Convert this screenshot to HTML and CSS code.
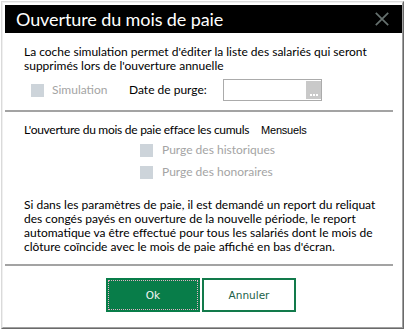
FILE: index.html
```html
<!DOCTYPE html>
<html lang="fr">
<head>
<meta charset="utf-8">
<title>Ouverture du mois de paie</title>
<link rel="stylesheet" href="styles.css">
</head>
<body>
<div class="window">
  <div class="frame">
    <div class="dialog">
      <div class="titlebar">
        <span class="title">Ouverture du mois de paie</span>
        <svg class="close" width="14" height="14" viewBox="0 0 14 14">
          <path d="M0.8 0.8 L13.2 13.2 M13.2 0.8 L0.8 13.2" stroke="#66716f" stroke-width="1.7" fill="none"/>
        </svg>
      </div>
      <div class="body">
        <div class="sec1">
          <p class="text">La coche simulation permet d'éditer la liste des salariés qui seront<br>supprimés lors de l'ouverture annuelle</p>
          <div class="row">
            <div class="sim"><span class="cb"></span><span class="dis">Simulation</span></div>
            <span class="datelabel">Date de purge:</span>
            <div class="datefield">
              <span class="input"></span>
              <span class="dots"><i></i><i></i><i></i></span>
            </div>
          </div>
        </div>
        <div class="sep"></div>
        <div class="sec2">
          <p class="text cumulsline"><span class="cumuls">L'ouverture du mois de paie efface les cumuls</span><span class="mensuels">Mensuels</span></p>
          <div class="opt"><span class="cb"></span><span class="dis">Purge des historiques</span></div>
          <div class="opt"><span class="cb"></span><span class="dis">Purge des honoraires</span></div>
        </div>
        <p class="text para">Si dans les paramètres de paie, il est demandé un report du reliquat<br>des congés payés en ouverture de la nouvelle période, le report<br>automatique va être effectué pour tous les salariés dont le mois de<br>clôture coïncide avec le mois de paie affiché en bas d'écran.</p>
        <div class="sep sep2"></div>
        <div class="buttons">
          <div class="btn ok"><span class="focus">Ok</span></div>
          <div class="btn cancel">Annuler</div>
        </div>
      </div>
    </div>
  </div>
</div>
</body>
</html>
```

FILE: styles.css
```css
html, body {
  margin: 0;
  padding: 0;
  background: #ffffff;
}

.window {
  margin: 1px 0 0 1px;
  width: 401px;
  border-style: solid;
  border-width: 1px;
  border-color: #dadada #6a6a6a #6a6a6a #dadada;
}

.frame {
  border-style: solid;
  border-width: 1px;
  border-color: #f0f0f0 #a0a0a0 #a0a0a0 #f0f0f0;
  padding: 2px 1px 2px 2px;
  background: #ffffff;
}

.dialog {
  width: 397px;
  height: 320px;
  display: flex;
  flex-direction: column;
  background: #ffffff;
}

.titlebar {
  height: 28px;
  background: #000000;
  display: flex;
  align-items: center;
  justify-content: space-between;
  padding: 0 13px 0 11px;
  flex-shrink: 0;
}

.title {
  font-family: Lato, "Noto Sans", sans-serif;
  font-size: 18px;
  letter-spacing: -0.1px;
  color: #ffffff;
  line-height: 28px;
  white-space: nowrap;
}

.close {
  display: block;
}

.body {
  font-family: Lato, "Noto Sans", sans-serif;
  font-size: 12px;
  color: #000000;
  display: flex;
  flex-direction: column;
}

.text {
  margin: 0;
  padding-left: 19px;
  line-height: 14px;
  white-space: nowrap;
}

.sec1 {
  padding-top: 12px;
}

.row {
  display: flex;
  align-items: center;
  height: 22px;
  margin-top: 6px;
}

.sim {
  display: flex;
  align-items: center;
  width: 98px;
  margin-left: 26px;
}

.cb {
  display: block;
  width: 13px;
  height: 13px;
  background: #cdd4da;
  flex-shrink: 0;
}

.dis {
  color: #a4a4a4;
  margin-left: 8px;
  line-height: 14px;
}

.datelabel {
  width: 94px;
  line-height: 14px;
}

.datefield {
  width: 97px;
  height: 20px;
  border: 1px solid #ababab;
  display: flex;
  align-items: center;
}

.input {
  flex: 1;
  height: 20px;
}

.dots {
  width: 15px;
  height: 18px;
  background: #c9c9c9;
  display: flex;
  justify-content: center;
  align-items: flex-end;
  gap: 1px;
  padding-bottom: 3px;
  box-sizing: border-box;
}

.dots i {
  display: block;
  width: 2px;
  height: 2px;
  background: #ffffff;
}

.sep {
  height: 2px;
  width: 388px;
  background: #a3a3a3;
  margin-top: 9px;
  flex-shrink: 0;
}

.sec2 {
  padding-top: 11px;
}

.cumulsline {
  display: flex;
  align-items: baseline;
}

.cumuls {
  display: block;
  width: 237px;
  letter-spacing: -0.27px;
}

.mensuels {
  font-family: "Liberation Sans", Arial, sans-serif;
  font-size: 11px;
  letter-spacing: -0.2px;
}

.opt {
  display: flex;
  align-items: center;
  height: 22px;
  padding-left: 135px;
}

.sec2 .text {
  margin-bottom: 2px;
}

.opt .dis {
  margin-left: 9px;
}

.para {
  margin-top: 15px;
}

.sep2 {
  margin-top: 10px;
}

.buttons {
  display: flex;
  justify-content: center;
  gap: 2px;
  margin-top: 12px;
  padding-right: 5px;
}

.btn {
  box-sizing: border-box;
  width: 94px;
  height: 34px;
  display: flex;
  align-items: center;
  justify-content: center;
  font-family: "DejaVu Sans", Verdana, sans-serif;
  font-size: 10.5px;
}

.ok {
  background: #087d49;
  color: #f4f4f4;
  padding: 2px;
}

.focus {
  flex: 1;
  align-self: stretch;
  display: flex;
  align-items: center;
  justify-content: center;
  border: 1px dotted #e7b0c6;
}

.cancel {
  background: #ffffff;
  border: 2px solid #127a4b;
  color: #215f48;
}
```
